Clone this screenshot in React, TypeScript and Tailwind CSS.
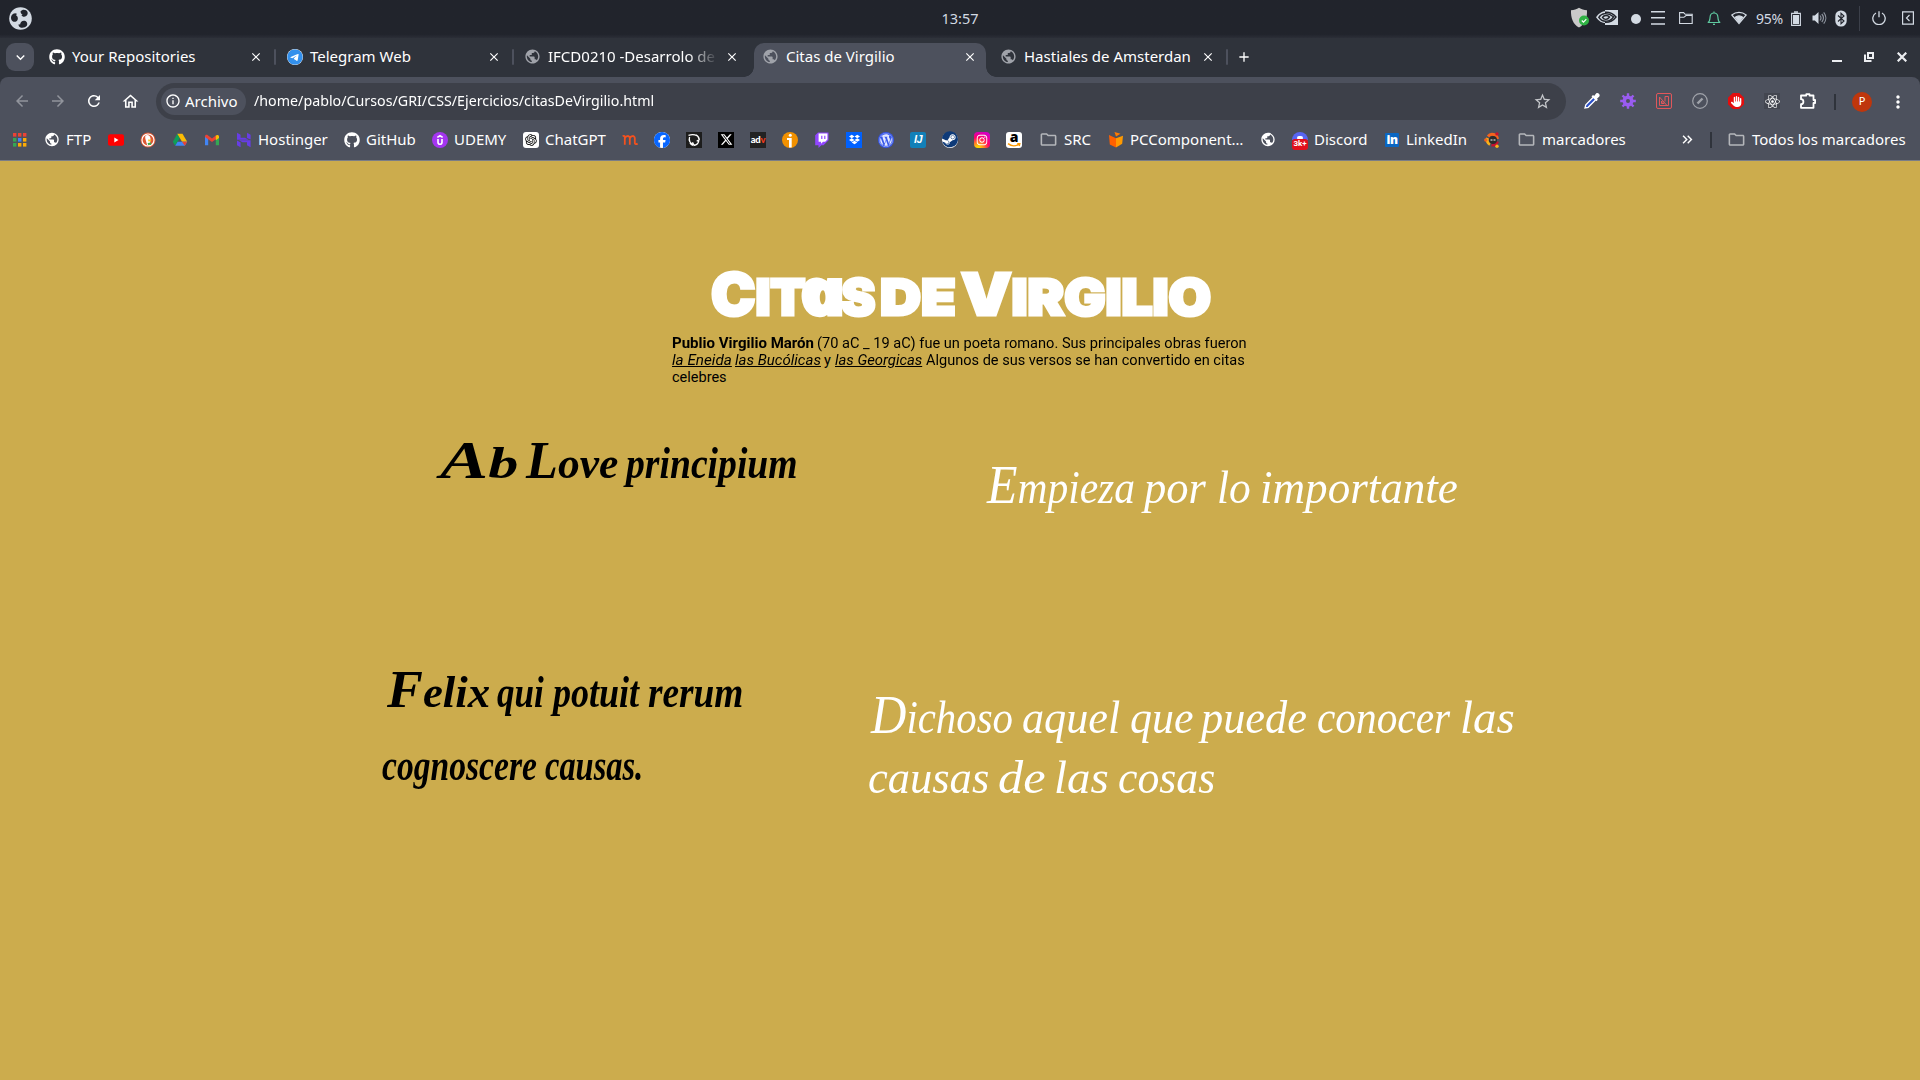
import { useLayoutEffect, useRef, useState, type ReactNode } from "react";
import {
  MdArrowBack, MdArrowForward, MdRefresh, MdOutlineHome, MdInfoOutline, MdStarBorder, MdMoreVert,
  MdClose, MdAdd, MdKeyboardArrowDown, MdKeyboardDoubleArrowRight, MdPublic, MdOutlineFolder,
} from "react-icons/md";
import {
  FaGithub, FaTelegram, FaXTwitter, FaDropbox, FaWordpress, FaSteam, FaInstagram, FaReact, FaHand, FaFacebook,
} from "react-icons/fa6";
import { RiOpenaiFill } from "react-icons/ri";

/* Stretches its content horizontally so that it fills an exact width. */
function Fit({ width, children }: { width: number; children: ReactNode }) {
  const ref = useRef<HTMLSpanElement>(null);
  const [scale, setScale] = useState(1);
  useLayoutEffect(() => {
    if (ref.current) setScale(width / ref.current.offsetWidth);
  }, [width]);
  return (
    <span className="block shrink-0 whitespace-nowrap" style={{ width }}>
      <span ref={ref} className="inline-block origin-left" style={{ transform: `scaleX(${scale})` }}>
        {children}
      </span>
    </span>
  );
}

type Run = { from: number; to: number; node: ReactNode };

/* A line of runs, each with its start and end measured from the line's left edge. */
function Line({ runs, className }: { runs: Run[]; className?: string }) {
  return (
    <span className={`flex ${className ?? ""}`}>
      {runs.map((r, i) => (
        <span key={i} className="block" style={{ marginLeft: r.from - (i ? runs[i - 1].to : 0) }}>
          <Fit width={r.to - r.from}>{r.node}</Fit>
        </span>
      ))}
    </span>
  );
}

const Initial = ({ children }: { children: string }) => <span className="text-[1.2em] leading-[0]">{children}</span>;

const Globe = ({ dim }: { dim?: boolean }) => (
  <MdPublic className={dim ? "size-[17px] text-[#a0a3aa]" : "size-[17px] text-white"} />
);

const Separator = () => <span className="h-4 w-0.5 shrink-0 rounded bg-[#4d515d]" />;

function Tab({ icon, title, active, fade }: { icon: ReactNode; title: string; active?: boolean; fade?: boolean }) {
  return (
    <div
      className={`relative flex h-[34px] w-[232px] shrink-0 items-center pr-[9px] pb-[7px] pl-2 ${active ? "rounded-t-[10px] bg-[#4d515d]" : ""}`}
    >
      {active && (
        <>
          <span className="absolute bottom-0 -left-2.5 size-2.5 bg-[radial-gradient(circle_at_0_0,transparent_9.5px,#4d515d_10px)]" />
          <span className="absolute -right-2.5 bottom-0 size-2.5 bg-[radial-gradient(circle_at_100%_0,transparent_9.5px,#4d515d_10px)]" />
        </>
      )}
      <span className="flex size-[17px] shrink-0 items-center justify-center">{icon}</span>
      <span
        className={`mb-px ml-[7px] w-[167px] shrink-0 text-[15px] leading-[22px] whitespace-nowrap ${fade ? "[mask-image:linear-gradient(to_right,black_140px,transparent_170px)]" : ""}`}
      >
        {title}
      </span>
      <span className="flex flex-1 justify-end">
        <MdClose className="size-3.5 shrink-0" />
      </span>
    </div>
  );
}

const Folder = () => <MdOutlineFolder className="size-[19px] shrink-0 text-[#b4b6ba]" />;

function Apps() {
  const colors = ["#ea4335", "#ea4335", "#ea4335", "#34a853", "#4285f4", "#fbab05", "#34a853", "#fbab05", "#fbab05"];
  return (
    <svg viewBox="0 0 14 14" className="size-3.5">
      {colors.map((c, i) => (
        <rect key={i} x={(i % 3) * 5} y={Math.floor(i / 3) * 5} width="3.4" height="3.6" fill={c} />
      ))}
    </svg>
  );
}

const Youtube = () => (
  <svg viewBox="0 0 16 16" className="size-4">
    <rect y="2.3" width="16" height="11.4" rx="2" fill="#f00" />
    <path d="M6.3 5.6v4.8L10.5 8z" fill="#fff" />
  </svg>
);

const Duck = () => (
  <svg viewBox="0 0 16 16" className="size-4">
    <circle cx="8" cy="8" r="7.5" fill="#de5833" />
    <circle cx="8" cy="8" r="6" fill="none" stroke="#fff" strokeWidth="1.2" />
    <path d="M5.3 3.8C7 2.3 10.3 3 10.5 6.5L10 13.5 7.3 13.6C6.6 10 4.6 6.5 5.3 3.8z" fill="#fff" />
    <path d="M8 7.5l3.5.2-.8 1.5-2.3.2z" fill="#fbc31c" />
    <path d="M7.6 11l3.5-.6v2.4l-3 .2z" fill="#42a948" />
  </svg>
);

const Drive = () => (
  <svg viewBox="0 0 16 16" className="size-4">
    <path d="M5.3 1.8L.8 9.7l2.4 4.1L8 5.8z" fill="#0f9d58" />
    <path d="M5.3 1.8h5.2l4.7 7.9H10z" fill="#fbbc04" />
    <path d="M5.6 9.7h9.6l-2.4 4.1H3.2z" fill="#4285f4" />
    <path d="M10 9.7h5.2l-2.4 4.1z" fill="#ea4335" />
  </svg>
);

const Gmail = () => (
  <svg viewBox="0 0 16 16" className="size-4">
    <path d="M1 3.5l3.2 2.4v7.4H1z" fill="#4285f4" />
    <path d="M15 3.5l-3.2 2.4v7.4H15z" fill="#34a853" />
    <path d="M1 4.5C1 2.8 2.6 2.4 3.8 3.2L8 6.4l4.2-3.2V7L8 10.1 1 5z" fill="#ea4335" />
    <path d="M11.8 3.5c1.4-1 3.2-.6 3.2 1V6l-3.2 2.3z" fill="#fbbc04" />
  </svg>
);

const Hostinger = () => (
  <svg viewBox="0 0 16 16" className="size-4" fill="#673de6">
    <path d="M1 7.200V.8l3.600 1.900v3l4.400.1 3.500 2H1zM11 6V.8l3.600 1.900v4.900zM11 13.300v-3l-4.500-.1L3 8.300h11.600v7L11 13.300zM1 13.300V8.500l3.600 1.900v4.900z" />
  </svg>
);

const Udemy = () => (
  <svg viewBox="0 0 16 16" className="size-4">
    <circle cx="8" cy="8" r="8" fill="#a435f0" />
    <path d="M5.300 5.400L8 3.700l2.700 1.700M6 7v3.300a2 2 0 0 0 4 0V7" fill="none" stroke="#fff" strokeWidth="1.6" />
  </svg>
);

const OpenAI = () => (
  <span className="flex size-4 items-center justify-center rounded-[3px] bg-white">
    <RiOpenaiFill className="size-3.5 text-black" />
  </span>
);

const Miro = () => (
  <svg viewBox="0 0 16 16" className="size-4" fill="none" stroke="#f4511e" strokeWidth="1.8">
    <path d="M.6 4.200c1.500-.8 2.400-.2 2.200 1.500V12.800M2.800 6.500c.8-3.300 5-3.200 5-.3v6.600M7.800 6.500c.8-3.300 5-3.200 5-.3v4.600c0 1.400 1.300 1.600 2.800.8" />
  </svg>
);

const Facebook = () => (
  <span className="flex size-4 items-center justify-center rounded-full bg-white">
    <FaFacebook className="size-4 text-[#0866ff]" />
  </span>
);

const DarkSwirl = () => (
  <svg viewBox="0 0 16 16" className="size-4" fill="none" stroke="#fff" strokeWidth="1.3">
    <rect width="16" height="16" fill="#1d1d1d" stroke="none" />
    <path d="M2.500 3.300c3-.9 6-1 8.500.5M3.600 5C2.500 8.500 4 11.500 7.700 12.600l-1.200-2.300M7.500 13.500c3.200-.4 5.300-2.500 5.400-5.700L10.700 9.300M13.300 8c-.1-2.500-1.200-4-3.200-5.300M4 11c.7 1.300 1.700 2 3 2.300" />
  </svg>
);

const XIcon = () => (
  <span className="flex size-4 items-center justify-center bg-black">
    <FaXTwitter className="size-[13px] text-white" />
  </span>
);

const Adv = () => (
  <span className="flex size-4 items-center justify-center bg-[#222] font-['Lato'] text-[9.5px] leading-none font-black tracking-[-0.3px] text-white">
    ad<span className="text-[#f03a1c]">v</span>
  </span>
);

const OrangeI = () => (
  <svg viewBox="0 0 16 16" className="size-4">
    <circle cx="8" cy="8" r="8" fill="#f29100" />
    <circle cx="8.3" cy="3.2" r="1.5" fill="#fff" />
    <path d="M5 6h4.700v9.500H7V8H5z" fill="#fff" />
  </svg>
);

const Twitch = () => (
  <svg viewBox="0 0 16 16" className="size-4">
    <path d="M4 .5L1.200 3.300v9.900h3.300V16l2.800-2.800h2.200l5-5V.5z" fill="#9146ff" />
    <path d="M4.600 1.600h8.800v6l-2.200 2.200H9L7 11.700V9.800H4.600z" fill="#fff" />
    <path d="M7.200 3.700h1.200V7H7.200zM10.200 3.700h1.200V7h-1.200z" fill="#9146ff" />
  </svg>
);

const Dropbox = () => (
  <span className="flex size-4 items-center justify-center bg-[#0061fe]">
    <FaDropbox className="size-[11px] text-white" />
  </span>
);

const Wordpress = () => (
  <span className="flex size-4 items-center justify-center rounded-full bg-[#3858e9]">
    <FaWordpress className="size-3.5 text-[#e4e9ff]" />
  </span>
);

const Ij = () => (
  <span className="flex size-4 items-center justify-center rounded-[2px] bg-[#1280b8] font-['Liberation_Sans'] text-[11px] leading-none font-bold tracking-[-0.5px] text-white italic">
    IJ
  </span>
);

const Steam = () => (
  <span className="flex size-4 items-center justify-center rounded-full bg-white">
    <FaSteam className="size-[16.5px] text-[#0e3a78]" />
  </span>
);

const Instagram = () => (
  <span className="flex size-4 items-center justify-center rounded-[4px] bg-[radial-gradient(circle_at_25%_105%,#ffd600_10%,#ff6930_35%,#ff0069_55%,#d300c5_85%)]">
    <FaInstagram className="size-3 text-white" />
  </span>
);

const Amazon = () => (
  <span className="flex size-4 flex-col items-center justify-start rounded-[3px] bg-white">
    <span className="h-[11px] font-['Open_Sans'] text-[14px] leading-[9px] font-extrabold text-black">a</span>
    <svg viewBox="0 0 14 4" className="h-1 w-3.5" fill="none" stroke="#f90" strokeWidth="1.4">
      <path d="M1 .6c3.500 2.800 7.500 2.800 11 .6M10.200.7l2.600-.1-.6 2.400" />
    </svg>
  </span>
);

const Box = () => (
  <svg viewBox="0 0 16 16" className="size-4">
    <path d="M1 3l7 3.200V15.500L1.800 12.500z" fill="#ff6000" />
    <path d="M8 6.200L15 3.800l-.8 8L8 15.500z" fill="#ff9a00" />
    <path d="M6.500 0l6 1.700L8 4.500z" fill="#ff7a00" />
  </svg>
);

const Discord = () => (
  <span className="relative flex size-4 flex-col">
    <span className="h-2 rounded-t-full bg-[#5865f2]" />
    <span className="absolute top-1 left-[5px] h-1 w-1.5 rounded-full bg-white" />
    <span className="absolute -bottom-0.5 left-0 flex h-[11px] w-4 items-center justify-center rounded-[3px] bg-[#e1101c] font-['Roboto'] text-[8px] font-bold text-white">
      3k+
    </span>
  </span>
);

const LinkedIn = () => (
  <span className="flex size-3.5 items-center justify-center rounded-[1px] bg-[#0a66c2] font-['Open_Sans'] text-[12px] leading-none font-extrabold tracking-[-0.5px] text-white">
    in
  </span>
);

const UbuntuEs = () => (
  <svg viewBox="0 0 16 16" className="size-4">
    <g fill="none" strokeWidth="3">
      <path d="M4 4.500A5.300 5.300 0 0 1 13.500 7" stroke="#f4631e" />
      <path d="M13.500 9.500A5.300 5.300 0 0 1 7.500 13" stroke="#c8102e" />
      <path d="M6 12.500A5.300 5.300 0 0 1 3.500 6" stroke="#fbb117" />
    </g>
    <circle cx="1.8" cy="8" r="1.7" fill="#f4631e" />
    <circle cx="13" cy="1.9" r="1.7" fill="#c8102e" />
    <circle cx="13" cy="14.3" r="1.7" fill="#fbb117" />
    <circle cx="9" cy="8" r="4" fill="#2b2b2b" />
    <path d="M6.500 8h2M9.500 8h2" stroke="#bbb" strokeWidth="1.5" />
  </svg>
);

type Mark = { icon: ReactNode; text?: string; w: string };

const marks: Mark[] = [
  { icon: <Globe />, text: "FTP", w: "w-16" },
  { icon: <Youtube />, w: "w-8" },
  { icon: <Duck />, w: "w-8" },
  { icon: <Drive />, w: "w-8" },
  { icon: <Gmail />, w: "w-8" },
  { icon: <Hostinger />, text: "Hostinger", w: "w-[108px]" },
  { icon: <FaGithub className="size-4" />, text: "GitHub", w: "w-[88px]" },
  { icon: <Udemy />, text: "UDEMY", w: "w-[91px]" },
  { icon: <OpenAI />, text: "ChatGPT", w: "w-[99px]" },
  { icon: <Miro />, w: "w-8" },
  { icon: <Facebook />, w: "w-8" },
  { icon: <DarkSwirl />, w: "w-8" },
  { icon: <XIcon />, w: "w-8" },
  { icon: <Adv />, w: "w-8" },
  { icon: <OrangeI />, w: "w-8" },
  { icon: <Twitch />, w: "w-8" },
  { icon: <Dropbox />, w: "w-8" },
  { icon: <Wordpress />, w: "w-8" },
  { icon: <Ij />, w: "w-8" },
  { icon: <Steam />, w: "w-8" },
  { icon: <Instagram />, w: "w-8" },
  { icon: <Amazon />, w: "w-[34px]" },
  { icon: <Folder />, text: "SRC", w: "w-[68px]" },
  { icon: <Box />, text: "PCComponent…", w: "w-[152px]" },
  { icon: <Globe />, w: "w-8" },
  { icon: <Discord />, text: "Discord", w: "w-[92px]" },
  { icon: <LinkedIn />, text: "LinkedIn", w: "w-[100px]" },
  { icon: <UbuntuEs />, w: "w-[34px]" },
  { icon: <Folder />, text: "marcadores", w: "w-[161px]" },
];

function SystemBar() {
  return (
    <header className="flex h-[38px] items-center justify-between bg-linear-to-b from-[#21242c] from-90% to-[#2b2e37] pb-0.5 text-[#d3dae3]">
      <div className="w-[600px] pl-[9px]">
        <svg viewBox="0 0 23 23" className="size-[23px]">
          <circle cx="11.5" cy="11.5" r="11.3" fill="#d3dae3" />
          <g fill="#21242c">
            <path d="M11.500 4.500c2-2.700 6-2 7 .6.800 2.400-1 4.800-3.400 4.700-1.200 0-2.200-.6-2.700-1.500l1.200-.6c-1.100-.7-2-1.500-2.100-3.200z" />
            <path d="M2.700 8.300c1.400-2.300 3.800-2.700 5.200-1.500l-.8 1.400c2.300 1.500 2.300 4.600.4 6-1.900 1.200-4.400.4-5.200-1.800-.5-1.300-.3-2.800.4-4.100z" />
            <path d="M9.600 17.300l1.500.2c.2-2.500 2.300-4.200 4.600-3.700 2.200.5 3.300 3 2.100 5-1.400 2.200-6.200 2.800-7.700.7-.5-.7-.6-1.400-.5-2.200z" />
          </g>
        </svg>
      </div>
      <div className="pt-px text-[14.5px]">13:57</div>
      <div className="flex w-[600px] items-center justify-end pr-1.5">
        <svg viewBox="0 0 20 22" className="h-[22px] w-5">
          <path d="M9 .8c2.500 1.700 5 2.300 8 2.500C17.300 11 15 17.500 9 20.500 3 17.500.7 11 1 3.300 4 3.100 6.500 2.500 9 .8z" fill="#c9c9c9" />
          <circle cx="14" cy="13.5" r="5" fill="#2fb344" />
          <path d="M11.800 13.500l1.700 1.600 2.800-2.900" fill="none" stroke="#fff" strokeWidth="1.2" />
        </svg>
        <svg viewBox="0 0 22 15" className="mb-0.5 ml-1.5 h-[15px] w-[22px]">
          <path d="M9 0h13v15H9z" fill="#d3dae3" />
          <path d="M0 7.300C3 3 6 1.300 10 1.300v12C6 13.300 2.500 11 0 7.300z" fill="#d3dae3" />
          <g fill="none" stroke="#21242c" strokeWidth="1.4">
            <path d="M2.800 7.300C5.500 3 11.500 2 17.500 6.800 14 12.300 6.500 12.800 2.800 7.300z" />
            <path d="M6.500 7.300c1.500-2.200 5-2.500 7-.3-2 3-5.300 3.200-7 .3zM9 2.300c4.500-.3 8 1.200 11 4.700-3 4-6.500 5.500-11 5.300" />
          </g>
        </svg>
        <span className="mt-0.5 ml-[13px] size-2.5 rounded-full bg-[#d3dae3]" />
        <svg viewBox="0 0 14 14" className="ml-2.5 size-3.5" stroke="currentColor" strokeWidth="1.5">
          <path d="M0 .8h14M0 6.800h14M0 13h14" />
        </svg>
        <svg viewBox="0 0 14 14" className="ml-3.5 size-3.5" fill="none" stroke="currentColor" strokeWidth="1.1">
          <path d="M.6 12.500V1.600h4l1.600 1.700h7v9.200zM.6 6.300h4.300L7 4.500h6.300" />
        </svg>
        <svg viewBox="0 0 14 14" className="ml-3.5 size-3.5" fill="none" stroke="#5fc9a0" strokeWidth="1.2">
          <path d="M.8 11.500c2.300-.8 2-3 2.300-5.500C3.300 3.300 4.800 2 7 2s3.700 1.300 3.900 4c.3 2.500 0 4.700 2.300 5.500zM7 2V.5M6 13.300h2" />
        </svg>
        <svg viewBox="0 0 16 14" className="ml-2.5 h-3.5 w-4" fill="none" stroke="currentColor" strokeWidth="1.2">
          <path d="M.8 4C5 .6 11 .6 15.200 4L8 12.500z" />
          <path d="M4.300 6.200c2.300-1.700 5.100-1.700 7.400 0L8 11z" fill="currentColor" />
        </svg>
        <span className="ml-[9px] w-[29px] pt-px text-[14px] tracking-[-0.2px]">95%</span>
        <svg viewBox="0 0 10 15" className="ml-[6px] h-[15px] w-2.5">
          <path d="M3 .3h4v1.500H3z" fill="currentColor" />
          <path d="M.6 2.400h8.800v12H.6z" fill="none" stroke="currentColor" strokeWidth="1.1" />
          <path d="M2 4h6v9H2z" fill="currentColor" />
        </svg>
        <svg viewBox="0 0 15 14" className="ml-[11px] h-3.5 w-[15px]">
          <path d="M.5 4.500h2.300L6.500 1v12L2.800 9.500H.5z" fill="currentColor" />
          <path d="M8 4.500c1.200 1.500 1.200 3.500 0 5M9.800 3c2 2.400 2 5.600 0 8M11.700 1.300c2.800 3.400 2.800 8 0 11.400" fill="none" stroke="#8c929c" strokeWidth="1.2" />
        </svg>
        <svg viewBox="0 0 12 17" className="ml-2 h-[17px] w-3">
          <rect x=".3" y=".5" width="11.4" height="16" rx="5.5" fill="currentColor" />
          <path d="M3 5.500l6 5.500-3 2.700V3.300L9 6l-6 5.500" fill="none" stroke="#21242c" strokeWidth="1.1" />
        </svg>
        <span className="ml-3 h-[25px] w-px bg-[#3c404a]" />
        <svg viewBox="0 0 14 14" className="ml-3 size-3.5" fill="none" stroke="currentColor" strokeWidth="1.3">
          <path d="M4 2a6.200 6.200 0 1 0 6 0M7 .3v6" />
        </svg>
        <svg viewBox="0 0 12 14" className="ml-4 h-3.5 w-3" fill="none" stroke="currentColor" strokeWidth="1.2">
          <path d="M.6.8h10.800v12.400H.6zM7.500 4l-3 3 3 3" />
        </svg>
      </div>
    </header>
  );
}

function TabStrip() {
  return (
    <div className="flex h-[39px] items-end bg-[#2f333b] pl-1.5 text-white">
      <span className="mb-1.5 flex size-7 items-center justify-center rounded-[9px] bg-[#4d515d]">
        <MdKeyboardArrowDown className="size-[17px]" />
      </span>
      <span className="w-1.5" />
      <Tab icon={<FaGithub className="size-4" />} title="Your Repositories" />
      <span className="flex w-1.5 justify-center pb-3"><Separator /></span>
      <Tab icon={<FaTelegram className="size-4 rounded-full bg-white text-[#3390ec]" />} title="Telegram Web" />
      <span className="flex w-1.5 justify-center pb-3"><Separator /></span>
      <Tab icon={<Globe dim />} title="IFCD0210 -Desarrolo de" fade />
      <span className="w-1.5" />
      <Tab icon={<Globe dim />} title="Citas de Virgilio" active />
      <span className="w-1.5" />
      <Tab icon={<Globe dim />} title="Hastiales de Amsterdan" />
      <span className="flex w-1.5 justify-center pb-3"><Separator /></span>
      <span className="ml-1.5 pb-3"><MdAdd className="size-4" /></span>
      <div className="ml-auto flex h-[39px] items-center pr-[13px] pb-px text-[#eceef1]">
        <svg viewBox="0 0 10 10" className="mr-[22px] size-2.5"><path d="M0 8h10v2H0z" fill="currentColor" /></svg>
        <svg viewBox="0 0 10 10" className="mr-[23px] size-2.5" fill="none" stroke="currentColor" strokeWidth="2">
          <path d="M4 1h5v5H4z" />
          <path d="M1 2.500V9h6.500" />
        </svg>
        <svg viewBox="0 0 10 10" className="size-2.5" stroke="currentColor" strokeWidth="2.2"><path d="M.7.7l8.600 8.600M9.300.7L.7 9.300" /></svg>
      </div>
    </div>
  );
}

const Cell = ({ children }: { children: ReactNode }) => (
  <span className="flex w-9 shrink-0 items-center justify-center pb-px">{children}</span>
);

function Toolbar() {
  return (
    <div className="flex h-[49px] items-center pl-1 text-white">
      <Cell><MdArrowBack className="size-[18px] text-[#91949c]" /></Cell>
      <Cell><MdArrowForward className="size-[18px] text-[#91949c]" /></Cell>
      <Cell><MdRefresh className="size-[18px]" /></Cell>
      <Cell><MdOutlineHome className="size-[19px]" /></Cell>
      <div className="ml-2 flex h-[37px] w-[1410px] items-center rounded-full bg-[#3d4049] pr-3.5 pl-[5px]">
        <span className="flex h-[27px] w-[85px] items-center rounded-full bg-[#4d515d] pb-px pl-1">
          <MdInfoOutline className="size-4" />
          <span className="ml-1 text-[15px]">Archivo</span>
        </span>
        <span className="ml-2 pb-0.5 text-[14px]">
          <Fit width={400}>/home/pablo/Cursos/GRI/CSS/Ejercicios/citasDeVirgilio.html</Fit>
        </span>
        <MdStarBorder className="ml-auto size-[19px] text-[#c3c5c9]" />
      </div>
      <span className="w-2" />
      <Cell>
        <svg viewBox="0 0 16 16" className="size-4">
          <path d="M1 15l.8-3.200L9.500 4l2.500 2.500-7.800 7.800z" fill="#2b50c8" stroke="#fff" strokeWidth="1.3" />
          <path d="M7.500 3.300l1.600-1.200 1 .8 2-2.300c1.800-1.600 4.600 1.200 3.200 3l-2.300 2.200.8 1-1.300 1.500z" fill="#fff" />
        </svg>
      </Cell>
      <Cell>
        <svg viewBox="0 0 16 16" className="size-4">
          <g stroke="#9a5cf0" strokeWidth="2.4">
            <path d="M8 .2v15.600M.2 8h15.600M2.500 2.500l11 11M13.500 2.500l-11 11" />
          </g>
          <circle cx="8" cy="8" r="5.5" fill="#9a5cf0" />
          <circle cx="8" cy="8" r="2" fill="#4d515d" />
        </svg>
      </Cell>
      <Cell>
        <svg viewBox="0 0 16 16" className="size-4" fill="none" stroke="#e0575b" strokeWidth="1">
          <rect x=".5" y=".5" width="15" height="15" rx="1.5" />
          <path d="M3.500 12.500V4l7.500 8.500zM5.500 10.500V8l2.500 2.500zM9 3.500h3.500v9H11M9 3.500v5" />
        </svg>
      </Cell>
      <Cell>
        <svg viewBox="0 0 16 16" className="size-4" fill="none" stroke="#a0a3aa">
          <circle cx="8" cy="8" r="7.3" strokeWidth="1.2" />
          <path d="M5.500 10.500l5-5" strokeWidth="2.4" />
        </svg>
      </Cell>
      <Cell>
        <span className="flex size-4 items-center justify-center bg-[#e40d0d] [clip-path:polygon(30%_0,70%_0,100%_30%,100%_70%,70%_100%,30%_100%,0_70%,0_30%)]">
          <FaHand className="size-[11px] text-white" />
        </span>
      </Cell>
      <Cell>
        <span className="flex size-4 items-center justify-center bg-[#434650]"><FaReact className="size-[15px]" /></span>
      </Cell>
      <Cell>
        <svg viewBox="0 0 18 18" className="size-[18px]" fill="none" stroke="#fff" strokeWidth="1.8">
          <path d="M2 3.500h5.300V2.200h3.200v1.300h4V8h1.600v3h-1.600v4.800H2v-3.600c3.200 0 3.200-5 0-5z" strokeLinejoin="round" />
        </svg>
      </Cell>
      <span className="ml-2 h-4 w-0.5 bg-[#2f333b]" />
      <span className="ml-4 flex size-5 items-center justify-center rounded-full bg-[#bf360c] text-[11px]">P</span>
      <span className="ml-4"><MdMoreVert className="size-5" /></span>
    </div>
  );
}

function Bookmarks() {
  return (
    <div className="flex h-[35px] items-center border-b border-[#7a7d86] pb-[7px] pl-[13px] text-[15px] text-white">
      <span className="flex w-[31px] shrink-0"><Apps /></span>
      {marks.map((m, i) => (
        <span key={i} className={`flex shrink-0 items-center ${m.w}`}>
          <span className="flex size-4 shrink-0 items-center justify-center">{m.icon}</span>
          {m.text && <span className={m.w === "w-[68px]" || m.w === "w-[161px]" ? "ml-2" : "ml-1.5"}>{m.text}</span>}
        </span>
      ))}
      <MdKeyboardDoubleArrowRight className="size-[17px] shrink-0" />
      <span className="ml-3.5 h-4 w-0.5 shrink-0 bg-[#2f333b]" />
      <span className="ml-4 flex size-4 items-center justify-center"><Folder /></span>
      <span className="ml-2 whitespace-nowrap">Todos los marcadores</span>
    </div>
  );
}

const plain = (words: [string, number, number][]): Run[] =>
  words.map(([w, from, to]) => ({
    from,
    to,
    node: /^[A-Z]/.test(w) ? <><Initial>{w[0]}</Initial>{w.slice(1)}</> : w,
  }));

const Big = ({ children }: { children: string }) => <span className="text-[58px] leading-[0]">{children}</span>;

/* Single-storey "a" set at capital height: an italic skewed back upright. */
const RoundA = () => (
  <span className="-ml-1 inline-block origin-bottom skew-x-[12deg] scale-x-115 font-['Open_Sans'] text-[64px] leading-[0] font-extrabold italic">
    a
  </span>
);

function Page() {
  return (
    <main className="flex-1 bg-[#ccac4d] pt-[107px] text-black">
      <h1 className="pl-[710px] font-['Inter'] text-[50px] leading-[58px] font-black text-white [-webkit-text-stroke:3px_white]">
        <Line
          runs={[
            {
              from: 1, to: 165,
              node: <><Big>C</Big><span className="uppercase">it</span><RoundA /><span className="uppercase">s</span></>,
            },
            { from: 170, to: 246, node: <span className="uppercase">de</span> },
            { from: 251, to: 501, node: <><Big>V</Big><span className="uppercase">irgilio</span></> },
          ]}
        />
      </h1>
      <p className="pt-[9px] pl-[672px] font-['Roboto'] text-[14.5px] leading-[17px]">
        <Line
          runs={[
            { from: 0, to: 142, node: <strong>Publio Virgilio Marón</strong> },
            { from: 145, to: 575, node: "(70 aC _ 19 aC) fue un poeta romano. Sus principales obras fueron" },
          ]}
        />
        <Line
          runs={[
            { from: 0, to: 60, node: <em className="underline">la Eneida</em> },
            { from: 63, to: 149, node: <em className="underline">las Bucólicas</em> },
            { from: 152, to: 159, node: "y" },
            { from: 163, to: 250, node: <em className="underline">las Georgicas</em> },
            { from: 254, to: 573, node: "Algunos de sus versos se han convertido en citas" },
          ]}
        />
        <Line runs={[{ from: 0, to: 55, node: "celebres" }]} />
      </p>
      <section className="mt-[34px] flex h-[230px] font-['Liberation_Serif'] italic">
        <h2 className="w-[980px] pt-3.5 pl-[438px] text-[44px] leading-[60px] font-bold">
          <Line runs={plain([["Ab", 2, 80], ["Love", 88, 180], ["principium", 188, 360]])} />
        </h2>
        <h3 className="pt-[38px] text-[46px] leading-[60px] text-white">
          <Line runs={plain([["Empieza", 7, 155], ["por", 164, 226], ["lo", 237, 271], ["importante", 280, 478]])} />
        </h3>
      </section>
      <section className="flex font-['Liberation_Serif'] italic">
        <h2 className="w-[868px] pt-1.5 pl-[382px] text-[44px] leading-[73px] font-bold">
          <Line runs={plain([["Felix", 5, 108], ["qui", 115, 162], ["potuit", 171, 257], ["rerum", 266, 361]])} />
          <Line runs={plain([["cognoscere", 0, 155], ["causas.", 163, 261]])} />
        </h2>
        <h3 className="pt-[38px] text-[46px] leading-[60px] text-white">
          <Line
            runs={plain([
              ["Dichoso", 3, 145], ["aquel", 154, 252], ["que", 262, 325], ["puede", 333, 439], ["conocer", 449, 582], ["las", 592, 647],
            ])}
          />
          <Line runs={plain([["causas", 0, 121], ["de", 130, 177], ["las", 186, 241], ["cosas", 250, 347]])} />
        </h3>
      </section>
    </main>
  );
}

export default function App() {
  return (
    <div className="flex h-screen w-screen flex-col overflow-hidden bg-[#2f333b] font-['Noto_Sans']">
      <SystemBar />
      <TabStrip />
      <div className="h-[84px] shrink-0 rounded-t-lg bg-[#4d515d]">
        <Toolbar />
        <Bookmarks />
      </div>
      <Page />
    </div>
  );
}
